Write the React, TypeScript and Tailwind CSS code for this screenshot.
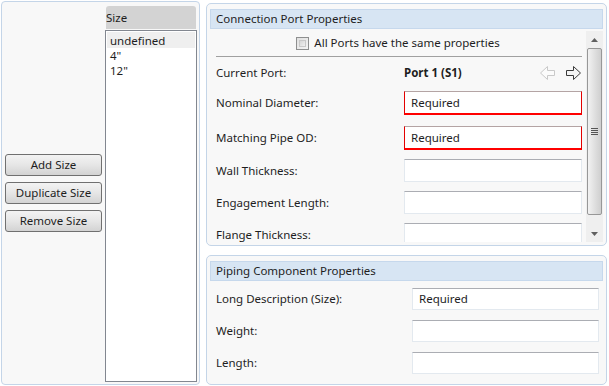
import React from 'react';

const font = { fontFamily: '"Noto Sans", "Open Sans", sans-serif' };

function Arrow({ dir, light }: { dir: 'left' | 'right'; light?: boolean }) {
  const pts =
    dir === 'right'
      ? '1.5,5.5 8.5,5.5 8.5,1.5 15.5,8 8.5,14.5 8.5,10.5 1.5,10.5'
      : '15.5,5.5 8.5,5.5 8.5,1.5 1.5,8 8.5,14.5 8.5,10.5 15.5,10.5';
  return (
    <svg width="17" height="16" viewBox="0 0 17 16">
      <polygon
        points={pts}
        fill={light ? '#fbfbfb' : '#f4f4f4'}
        stroke={light ? '#c9c9c9' : '#3a3a3a'}
        strokeWidth="1"
        strokeLinejoin="miter"
      />
    </svg>
  );
}

function Field({ value, required, className }: { value?: string; required?: boolean; className: string }) {
  return (
    <div
      className={
        required
          ? `flex shrink-0 items-center border border-[#e40000] border-t-[#b4a4a4] border-b-2 border-b-[#ff0000] bg-white pl-[6px] text-[11.5px] text-[#1e1e1e] ${className}`
          : `flex shrink-0 items-center border border-[#e3e9ef] border-t-[#abadb3] bg-white pl-[6px] text-[11.5px] text-[#1e1e1e] ${className}`
      }
    >
      {value}
    </div>
  );
}

function Btn({ label }: { label: string }) {
  return (
    <button className="flex h-[22px] w-[97px] items-center justify-center rounded-[3px] border border-[#707070] bg-gradient-to-b from-[#f3f3f3] via-[#e6e6e6] to-[#d3d3d3] text-[11.5px] text-[#1e1e1e]">
      {label}
    </button>
  );
}

function Scrollbar() {
  return (
    <div className="flex h-[211px] w-[17px] shrink-0 flex-col bg-[#efefef]">
      <div className="flex h-[17px] shrink-0 items-center justify-center">
        <svg width="7" height="4" viewBox="0 0 7 4"><polygon points="0,4 3.5,0 7,4" fill="#606060" /></svg>
      </div>
      <div className="mx-[1px] flex h-[167px] shrink-0 items-center justify-center rounded-[2px] border border-[#979797] bg-gradient-to-r from-[#f2f2f2] via-[#e0e0e0] to-[#cfcfcf]">
        <div className="flex flex-col gap-[1px]">
          <div className="h-[1px] w-[7px] bg-[#555]" />
          <div className="h-[1px] w-[7px] bg-[#555]" />
          <div className="h-[1px] w-[7px] bg-[#555]" />
          <div className="h-[1px] w-[7px] bg-[#555]" />
        </div>
      </div>
      <div className="flex-1" />
      <div className="flex h-[17px] shrink-0 items-center justify-center">
        <svg width="7" height="4" viewBox="0 0 7 4"><polygon points="0,0 3.5,4 7,0" fill="#606060" /></svg>
      </div>
    </div>
  );
}

export default function App() {
  const labelCls = 'w-[188px] text-[11.5px] text-[#1e1e1e]';
  const rowCls = 'ml-[6px] flex shrink-0 items-center';
  return (
    <div className="flex h-[386px] w-[609px] bg-white" style={font}>
      {/* left: sizes */}
      <div className="ml-[1px] mt-[1px] flex h-[384px] w-[199px] rounded-[4px] border border-[#c4d5e8] bg-[#f8f8f8]">
        <div className="flex flex-col justify-center gap-[6px] pl-[3px]">
          <Btn label="Add Size" />
          <Btn label="Duplicate Size" />
          <Btn label="Remove Size" />
        </div>
        <div className="ml-[3px] mt-[4px] flex flex-col">
          <div className="ml-[1px] flex h-[23px] w-[90px] items-center rounded-t-[3px] bg-[#d3d3d3] text-[11.5px] text-[#1e1e1e]">
            Size
          </div>
          <div className="mt-[1px] h-[352px] w-[92px] border border-[#828790] bg-white p-[1px] text-[11.5px] leading-[15px] text-[#1e1e1e]">
            <div className="flex h-[16px] items-center bg-[#efefef] pl-[3px]">undefined</div>
            <div className="flex h-[15px] items-center pl-[3px]">4"</div>
            <div className="flex h-[15px] items-center pl-[3px]">12"</div>
          </div>
        </div>
      </div>

      {/* right */}
      <div className="ml-[6px] flex flex-col">
        <div className="mt-[3px] flex h-[243px] w-[401px] flex-col rounded-[5px] border border-[#c4d5e8] bg-[#f8f8f8] px-[3px] pt-[5px]">
          <div className="flex h-[20px] shrink-0 items-center border border-[#c6d8ec] bg-[#d7e5f3] pl-[5px] text-[11.5px] text-[#1e1e1e]">
            Connection Port Properties
          </div>
          <div className="mt-[2px] flex h-[211px] shrink-0 overflow-hidden">
            <div className="flex w-[377px] flex-col">
              <div className="mt-[5px] flex h-[14px] shrink-0 items-center justify-center gap-[5px] text-[11.5px] text-[#1e1e1e]">
                <div className="h-[13px] w-[13px] border border-[#8e8f8f] bg-gradient-to-br from-[#e0e0e0] to-[#f4f4f4] p-[2px]">
                  <div className="h-full w-full border border-[#c8c8c8] bg-gradient-to-br from-[#d6d6d6] to-[#f0f0f0]" />
                </div>
                All Ports have the same properties
              </div>
              <div className="ml-[6px] mt-[6px] h-[1px] w-[366px] shrink-0 bg-[#a0a0a0]" />
              <div className="ml-[6px] mt-[4px] flex h-[24px] shrink-0 items-center">
                <div className={labelCls}>Current Port:</div>
                <div className="flex-1 text-[11.5px] font-bold text-[#1e1e1e]">Port 1 (S1)</div>
                <div className="flex items-center gap-[9px] pr-[4px]">
                  <Arrow dir="left" light />
                  <Arrow dir="right" />
                </div>
              </div>
              <div className={`${rowCls} mt-[6px]`}>
                <div className={labelCls}>Nominal Diameter:</div>
                <Field value="Required" required className="h-[24px] w-[178px]" />
              </div>
              <div className={`${rowCls} mt-[11px]`}>
                <div className={labelCls}>Matching Pipe OD:</div>
                <Field value="Required" required className="h-[24px] w-[178px]" />
              </div>
              <div className={`${rowCls} mt-[9px]`}>
                <div className={labelCls}>Wall Thickness:</div>
                <Field className="h-[23px] w-[178px]" />
              </div>
              <div className={`${rowCls} mt-[9px]`}>
                <div className={labelCls}>Engagement Length:</div>
                <Field className="h-[23px] w-[178px]" />
              </div>
              <div className={`${rowCls} mt-[9px]`}>
                <div className={labelCls}>Flange Thickness:</div>
                <Field className="h-[23px] w-[178px]" />
              </div>
            </div>
            <Scrollbar />
          </div>
        </div>

        <div className="mt-[9px] flex h-[130px] w-[401px] flex-col rounded-[5px] border border-[#c4d5e8] bg-[#f8f8f8] px-[3px] pt-[5px]">
          <div className="flex h-[20px] shrink-0 items-center border border-[#c6d8ec] bg-[#d7e5f3] pl-[5px] text-[11.5px] text-[#1e1e1e]">
            Piping Component Properties
          </div>
          <div className={`${rowCls} mt-[7px]`}>
            <div className="w-[196px] text-[11.5px] text-[#1e1e1e]">Long Description (Size):</div>
            <Field value="Required" className="h-[22px] w-[187px]" />
          </div>
          <div className={`${rowCls} mt-[10px]`}>
            <div className="w-[196px] text-[11.5px] text-[#1e1e1e]">Weight:</div>
            <Field className="h-[22px] w-[187px]" />
          </div>
          <div className={`${rowCls} mt-[10px]`}>
            <div className="w-[196px] text-[11.5px] text-[#1e1e1e]">Length:</div>
            <Field className="h-[22px] w-[187px]" />
          </div>
        </div>
      </div>
    </div>
  );
}
